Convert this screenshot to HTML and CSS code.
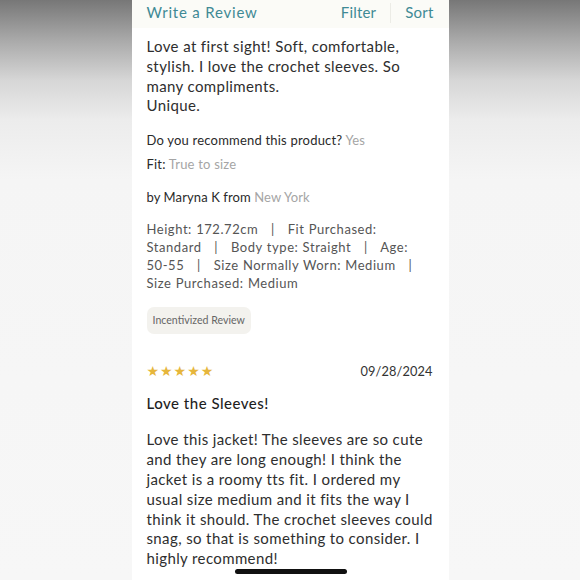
FILE: index.html
```html
<!DOCTYPE html>
<html>
<head>
<meta charset="utf-8">
<link rel="stylesheet" href="styles.css">
</head>
<body>
<div class="stage">
  <div class="side"></div>
  <main class="phone">
    <header class="topbar">
      <span class="link write">Write a Review</span>
      <div class="actions">
        <span class="link">Filter</span>
        <span class="divider"></span>
        <span class="link">Sort</span>
      </div>
    </header>
    <section class="review first">
      <p class="body">Love at first sight! Soft, comfortable, stylish. I love the crochet sleeves. So many compliments.<br>Unique.</p>
      <p class="qa">Do you recommend this product? <span class="muted">Yes</span></p>
      <p class="qa fit">Fit: <span class="muted">True to size</span></p>
      <p class="author">by Maryna K from <span class="muted">New York</span></p>
      <p class="details">Height: 172.72cm &nbsp;&nbsp;|&nbsp;&nbsp; Fit Purchased: Standard &nbsp;&nbsp;|&nbsp;&nbsp; Body type: Straight &nbsp;&nbsp;|&nbsp;&nbsp; Age: 50-&#8288;55 &nbsp;&nbsp;|&nbsp;&nbsp; Size Normally Worn: Medium &nbsp;&nbsp;|&nbsp;&nbsp; Size Purchased: Medium</p>
      <span class="badge">Incentivized Review</span>
    </section>
    <section class="review second">
      <div class="meta">
        <span class="stars">★★★★★</span>
        <span class="date">09/28/2024</span>
      </div>
      <h2 class="title">Love the Sleeves!</h2>
      <p class="body">Love this jacket! The sleeves are so cute and they are long enough! I think the jacket is a roomy tts fit. I ordered my usual size medium and it fits the way I think it should. The crochet sleeves could snag, so that is something to consider. I highly recommend!</p>
    </section>
    <div class="home"></div>
  </main>
  <div class="side"></div>
</div>
</body>
</html>
```
FILE: styles.css
```css
html, body {
  margin: 0;
  padding: 0;
}
body {
  width: 580px;
  height: 580px;
  overflow: hidden;
  font-family: Lato, "Noto Sans", sans-serif;
  color: #2e2e2e;
}
.stage {
  display: flex;
  height: 580px;
}
.side {
  flex: 1;
  background: linear-gradient(to bottom, #777 0px, #a9a9a9 40px, #d6d6d6 80px, #ececec 120px, #f5f5f5 180px, #f7f7f7 580px);
}
.phone {
  width: 317px;
  flex: none;
  background: #fff;
  position: relative;
  display: flex;
  flex-direction: column;
}
.topbar {
  height: 28px;
  background: #fbfbf7;
  display: flex;
  justify-content: space-between;
  align-items: flex-start;
  padding: 3px 15px 0 15px;
  box-sizing: border-box;
}
.link {
  color: #3f8a95;
  font-size: 15px;
  line-height: 19px;
  letter-spacing: 0.2px;
}
.write {
  letter-spacing: 0.8px;
}
.actions {
  display: flex;
  align-items: flex-start;
}
.divider {
  width: 1px;
  height: 20px;
  background: #ecece6;
  margin: 0 14px 0 14px;
}
.review {
  padding: 0 12px 0 15px;
}
p {
  margin: 0;
}
.body {
  font-size: 15px;
  line-height: 19.8px;
  color: #2e2e2e;
  letter-spacing: 0.38px;
}
.first .body {
  margin-top: 9px;
}
.qa {
  font-size: 13px;
  line-height: 16px;
  margin-top: 16px;
  color: #2a2a2a;
  letter-spacing: 0.2px;
}
.fit {
  margin-top: 8px;
}
.muted {
  color: #a5a5a5;
}
.author {
  font-size: 13px;
  line-height: 16px;
  margin-top: 17px;
  color: #2a2a2a;
  letter-spacing: 0.1px;
}
.details {
  font-size: 13px;
  line-height: 17.8px;
  margin-top: 16px;
  color: #555;
  letter-spacing: 0.55px;
  word-spacing: 0.4px;
  padding-right: 2px;
}
.badge {
  display: inline-block;
  margin-top: 15px;
  background: #f3f2ee;
  border-radius: 7px;
  font-size: 10.6px;
  line-height: 27px;
  padding: 0 6px;
  color: #666;
}
.second {
  margin-top: 28px;
  padding-right: 12px;
}
.meta {
  display: flex;
  justify-content: space-between;
  align-items: center;
  height: 18px;
  padding-right: 4px;
}
.stars {
  color: #e6b63c;
  font-size: 14px;
  letter-spacing: 1px;
  font-family: "DejaVu Sans", sans-serif;
}
.date {
  font-size: 12.8px;
  color: #333;
  letter-spacing: 0.1px;
}
.title {
  margin: 14px 0 0 0;
  font-size: 15px;
  font-weight: 500;
  line-height: 18px;
  color: #1f1f1f;
  letter-spacing: 0.5px;
}
.second .body {
  margin-top: 18px;
}
.home {
  position: absolute;
  left: 103px;
  bottom: 6px;
  width: 112px;
  height: 5px;
  border-radius: 3px;
  background: #111;
}
```
